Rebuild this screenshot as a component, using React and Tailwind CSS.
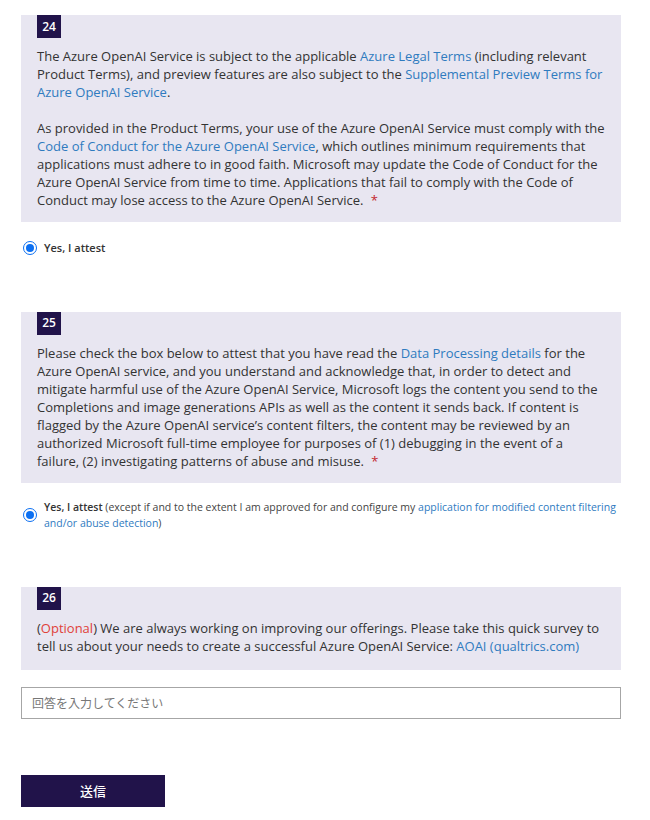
import React from 'react'

const Link = ({ children }) => <span className="text-[#2f7bbf]">{children}</span>
const Star = () => <span className="text-[#c4262e] ml-1">*</span>

const Badge = ({ n }) => (
    <div className="w-6 h-[23px] bg-[#21134a] text-white text-[12px] font-semibold flex items-center justify-center">{n}</div>
)

const Radio = () => (
    <span className="shrink-0 w-[14px] h-[14px] rounded-full border-[1.5px] border-[#0b6ff2] flex items-center justify-center">
        <span className="w-[8px] h-[8px] rounded-full bg-[#0b6ff2]" />
    </span>
)

const Card = ({ n, tall, children }) => (
    <div className={tall ? "w-[600px] bg-[#e8e6f1] px-4 pb-[15px]" : "w-[600px] bg-[#e8e6f1] px-4 pb-[13px]"}>
        <Badge n={n} />
        <div className="mt-[9px] text-[13px] leading-[18px] text-[#333]">{children}</div>
    </div>
)

export default function App() {
    return (
        <div className="bg-white min-h-[820px] pl-[21px] pt-[15px] font-['Open_Sans',sans-serif]">
            <Card n="24">
                <p>
                    The Azure OpenAI Service is subject to the applicable <Link>Azure Legal Terms</Link> (including relevant Product Terms), and preview features are also subject to the <Link>Supplemental Preview Terms for Azure OpenAI Service</Link>.
                </p>
                <p className="mt-[18px]">
                    As provided in the Product Terms, your use of the Azure OpenAI Service must comply with the <Link>Code of Conduct for the Azure OpenAI Service</Link>, which outlines minimum requirements that applications must adhere to in good faith. Microsoft may update the Code of Conduct for the Azure OpenAI Service from time to time. Applications that fail to comply with the Code of Conduct may lose access to the Azure OpenAI Service. <Star />
                </p>
            </Card>

            <div className="flex items-center gap-[7px] mt-[18px] pl-[2px] text-[11px] font-semibold text-[#333]">
                <Radio />
                <span>Yes, I attest</span>
            </div>

            <div className="mt-[55px]">
                <Card n="25">
                    <p>
                        Please check the box below to attest that you have read the <Link>Data Processing details</Link> for the Azure OpenAI service, and you understand and acknowledge that, in order to detect and mitigate harmful use of the Azure OpenAI Service, Microsoft logs the content you send to the Completions and image generations APIs as well as the content it sends back. If content is flagged by the Azure OpenAI service’s content filters, the content may be reviewed by an authorized Microsoft full-time employee for purposes of (1) debugging in the event of a failure, (2) investigating patterns of abuse and misuse. <Star />
                    </p>
                </Card>
            </div>

            <div className="flex items-center gap-[7px] mt-[16px] pl-[2px] w-[608px] text-[10.5px] leading-[16px] text-[#444]">
                <Radio />
                <p>
                    <span className="font-semibold text-[#333]">Yes, I attest</span> (except if and to the extent I am approved for and configure my <Link>application for modified content filtering and/or abuse detection</Link>)
                </p>
            </div>

            <div className="mt-[56px]">
                <Card n="26" tall>
                    <p>
                        (<span className="text-[#e0413a]">Optional</span>) We are always working on improving our offerings. Please take this quick survey to tell us about your needs to create a successful Azure OpenAI Service: <Link>AOAI (qualtrics.com)</Link>
                    </p>
                </Card>
            </div>

            <input
                type="text"
                placeholder="回答を入力してください"
                className="mt-[17px] block w-[600px] h-[32px] border border-[#a6a6a6] px-[10px] text-[12px] placeholder-[#777] outline-none font-['Noto_Sans_CJK_JP',sans-serif]"
            />

            <button className="mt-[56px] w-[144px] h-[32px] bg-[#21134a] text-white text-[13px] font-medium font-['Noto_Sans_CJK_JP',sans-serif]">
                送信
            </button>
        </div>
    )
}
